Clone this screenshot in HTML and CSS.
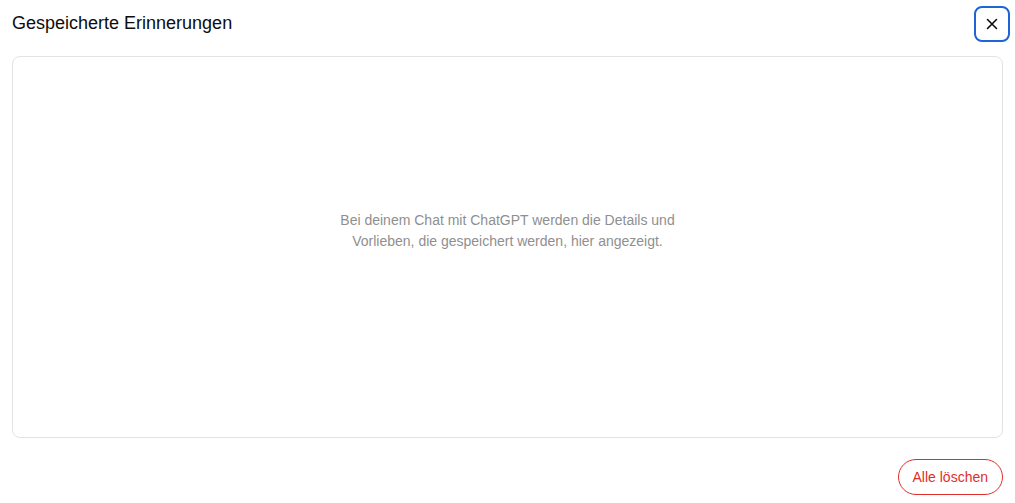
FILE: index.html
```html
<!DOCTYPE html>
<html lang="de">
<head>
  <meta charset="UTF-8">
  <meta name="viewport" content="width=device-width, initial-scale=1.0">
  <title>Gespeicherte Erinnerungen</title>
  <link rel="stylesheet" href="styles.css">
</head>
<body>
  <div class="dialog">
    <div class="dialog-header">
      <h2 class="dialog-title">Gespeicherte Erinnerungen</h2>
      <button class="close-btn" aria-label="Schließen">
        <svg width="16" height="16" viewBox="0 0 16 16" fill="none">
          <path d="M3.5 3.5 L12.5 12.5 M12.5 3.5 L3.5 12.5" stroke="#0d0d0d" stroke-width="1.6" stroke-linecap="round"/>
        </svg>
      </button>
    </div>

    <div class="memory-box">
      <p class="empty-text">Bei deinem Chat mit ChatGPT werden die Details und<br>Vorlieben, die gespeichert werden, hier angezeigt.</p>
    </div>

    <div class="dialog-footer">
      <button class="btn-danger">Alle löschen</button>
    </div>
  </div>
</body>
</html>
```

FILE: styles.css
```css
body {
  margin: 0;
  font-family: "Liberation Sans", Arial, sans-serif;
  background-color: #fff;
  color: #0d0d0d;
}
.dialog {
  padding: 0 12px;
}
.dialog-header {
  height: 46px;
  display: flex;
  align-items: center;
  justify-content: space-between;
}
.dialog-title {
  margin: 0;
  font-size: 18px;
  font-weight: 400;
  color: #0d0d0d;
}
.close-btn {
  width: 36px;
  height: 36px;
  margin-top: 2px;
  margin-right: -7px;
  display: flex;
  align-items: center;
  justify-content: center;
  background: #fff;
  border: 2px solid #1f64d6;
  border-radius: 8px;
  padding: 0;
  cursor: pointer;
}
.memory-box {
  margin-top: 10px;
  height: 382px;
  box-sizing: border-box;
  padding-bottom: 32px;
  border: 1px solid #e3e3e3;
  border-radius: 8px;
  display: flex;
  align-items: center;
  justify-content: center;
}
.empty-text {
  margin: 0;
  font-size: 14px;
  line-height: 21px;
  color: #8f8f8f;
  text-align: center;
}
.dialog-footer {
  margin-top: 21px;
  display: flex;
  justify-content: flex-end;
}
.btn-danger {
  height: 36px;
  padding: 0 14px;
  font-family: inherit;
  font-size: 14px;
  font-weight: 500;
  color: #e02e2a;
  background: #fff;
  border: 1px solid #e02e2a;
  border-radius: 18px;
  cursor: pointer;
}
```
